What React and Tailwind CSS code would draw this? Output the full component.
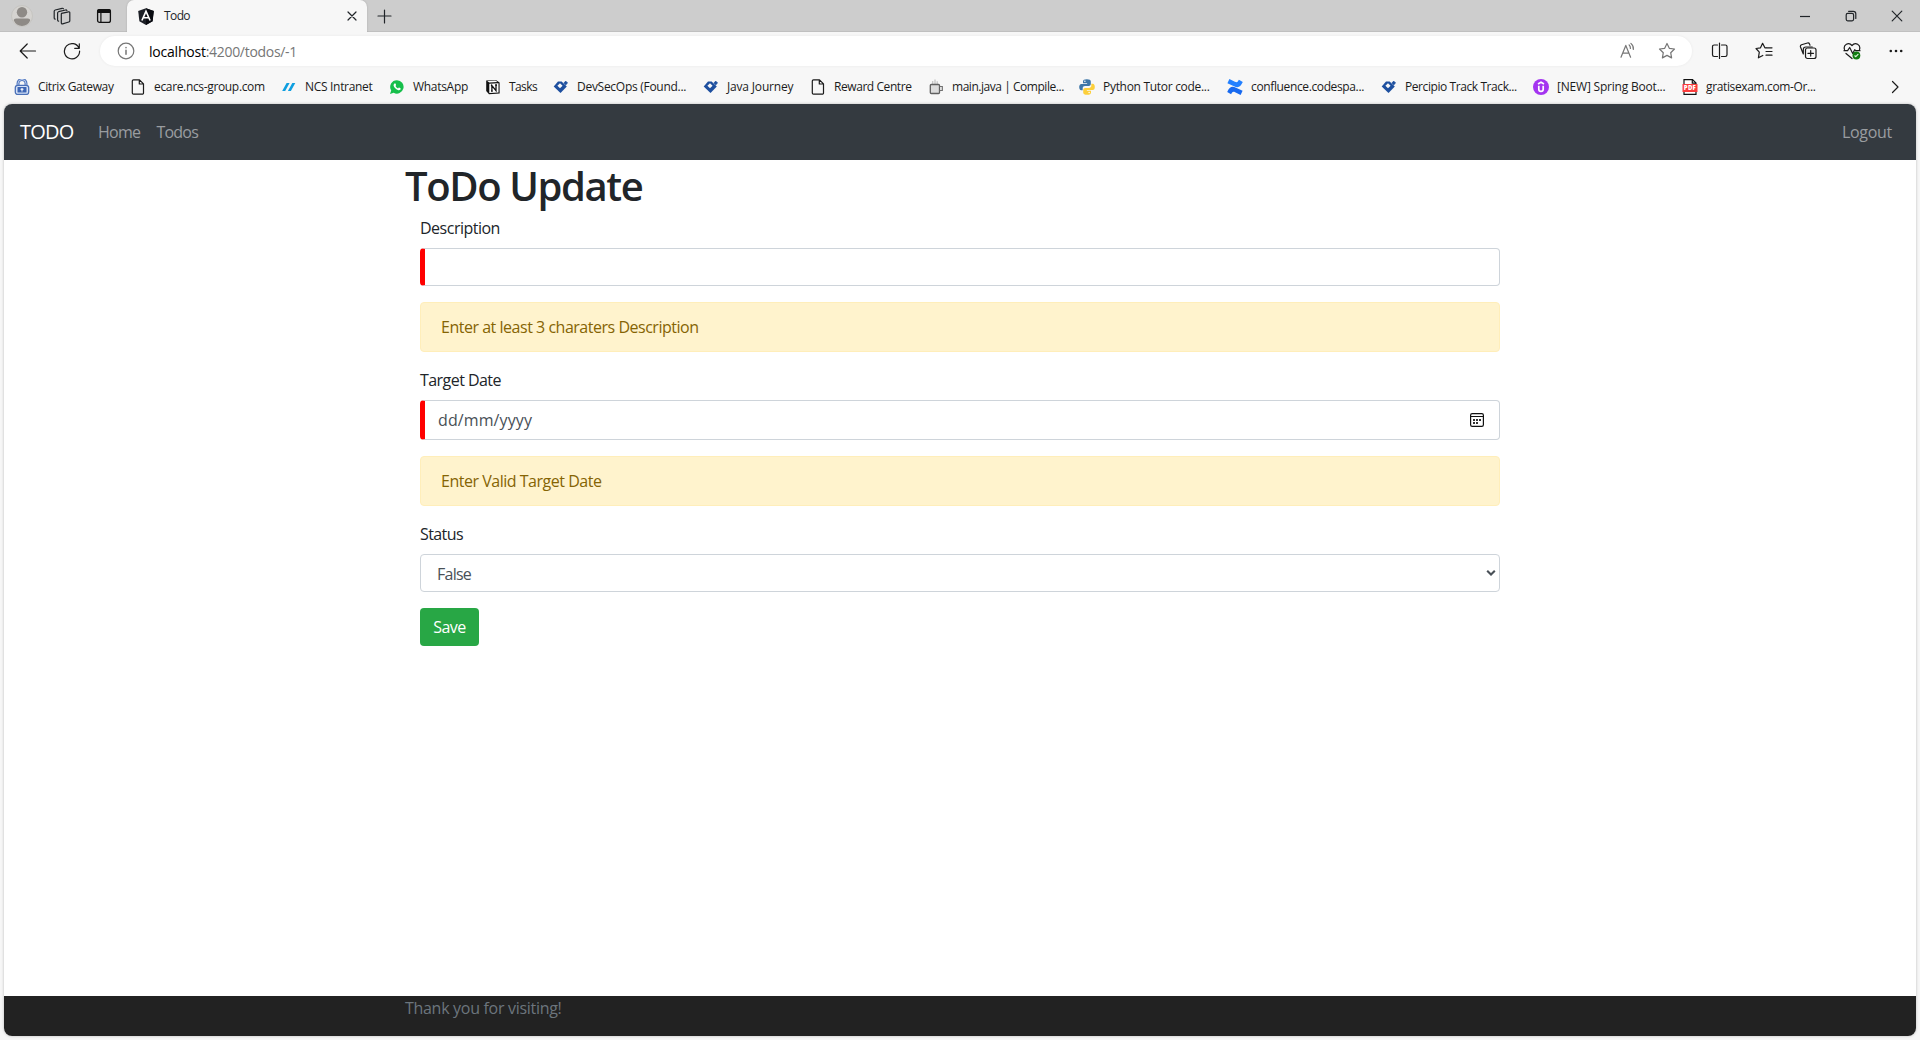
function Stroke({ size = 18, children, className = '' }) {
  return (
    <svg width={size} height={size} viewBox={`0 0 ${size} ${size}`} fill="none" stroke="currentColor" strokeWidth="1.2" strokeLinecap="round" strokeLinejoin="round" className={`block shrink-0 ${className}`}>
      {children}
    </svg>
  );
}

function FileIcon() {
  return (
    <Stroke size={16}>
      <path d="M3.5.8h6l4 4V14a1.2 1.2 0 0 1-1.2 1.2H3.500A1.200 1.200 0 0 1 2.300 14V2A1.200 1.200 0 0 1 3.500.8zM9.300.8v4.200h4.200" />
    </Stroke>
  );
}

function LockIcon() {
  return (
    <svg width="16" height="16" viewBox="0 0 16 16">
      <path d="M4 8V4.500a4 4 0 0 1 8 0V8" fill="none" stroke="#4f76bf" strokeWidth="3" />
      <path d="M4 8V4.500a4 4 0 0 1 8 0V8" fill="none" stroke="#c9d8f2" strokeWidth=".9" />
      <rect x="1.300" y="6.300" width="13.400" height="9.200" rx="2.500" fill="#d6e2f7" stroke="#4a70b8" strokeWidth="1.300" />
      <rect x="3.500" y="8" width="9" height="5.600" rx=".6" fill="#3d66b5" />
      <path d="M8 9v3.500M6.500 10.300h3" stroke="#fff" strokeWidth="1.100" />
    </svg>
  );
}

function SlashIcon() {
  return (
    <svg width="16" height="16" viewBox="0 0 16 16" fill="#0f9fe0">
      <path d="M5.600 4h3L4.200 12h-3zM11.300 4h3l-4.400 8h-3z" />
    </svg>
  );
}

function WhatsAppIcon() {
  return (
    <svg width="16" height="16" viewBox="0 0 16 16">
      <path d="M8 1.200a6.700 6.700 0 1 1-3.300 12.600L1 15l1.200-3.600A6.700 6.700 0 0 1 8 1.200z" fill="#16bf4b" />
      <path d="M5.600 4.400c.5-.2.900 0 1.100.6l.4 1c.1.400-.4.800-.6 1 .6 1.200 1.400 1.900 2.600 2.400.3-.3.600-.9 1-.8l1.300.7c.5.200.2 1.100-.2 1.500-.6.500-1.500.6-2.400.2-2-.8-3.400-2.200-4.100-4-.3-1 .1-2.200.9-2.600z" fill="#fff" />
    </svg>
  );
}

function NotionIcon() {
  return (
    <svg width="16" height="16" viewBox="0 0 16 16">
      <path d="M1.200 1.600L10.800.9l3.800 2.700V14.500L4 15.200 1.200 12z" fill="#111" />
      <path d="M2.300 2.100l8.200-.6 1.900 1.400-8.100.5z" fill="#fff" />
      <path d="M4.300 4.700l9.200-.5v9.300l-9.200.6z" fill="#fff" />
      <path d="M6.900 12V6.600L11 11.600V6.100M5.900 6.500h1.500M6 12.200h1.800M10.100 6h1.900" fill="none" stroke="#111" strokeWidth="1.300" />
    </svg>
  );
}

function DiamondIcon() {
  return (
    <svg width="16" height="16" viewBox="0 0 16 16" fill="#1d4f9f">
      <path d="M5 2.400h3.600l5.200 5.200-6.300 6.300L.7 7.600z" />
      <path d="M7 4.300l2.600 2.500L7 9.300 4.400 6.800z" fill="#f7f7f7" />
      <path d="M12.700 2.100l1.900 1.900-1.900 1.900L10.800 4z" stroke="#1d4f9f" strokeWidth=".7" strokeLinejoin="round" />
    </svg>
  );
}

function CupIcon() {
  return (
    <svg width="16" height="16" viewBox="0 0 16 16" fill="none">
      <path d="M4.700 5V2M7 5V.6M9.200 5V2.200" stroke="#c0c0c0" strokeWidth="1.200" />
      <rect x="2.300" y="5.500" width="9.200" height="9" rx="1" fill="#dcdcdc" stroke="#606060" strokeWidth="1.300" />
      <path d="M11.500 7.500H14.300v4h-2.800" stroke="#707070" strokeWidth="1.200" />
    </svg>
  );
}

function PythonIcon() {
  return (
    <svg width="16" height="16" viewBox="0 0 16 16">
      <path d="M7.900.3c-2.700 0-3.900.8-3.900 2.300v1.700h4.100v.6H2.400C.9 4.900.2 6.300.2 8s.7 3.200 2 3.200h1.500V9.300c0-1.300 1-2.200 2.300-2.200h3.800c1.100 0 2-.9 2-2V2.600C11.800 1 10.400.3 7.900.3z" fill="#3d76a8" />
      <path d="M8.100 15.700c2.700 0 3.900-.8 3.900-2.300v-1.700H7.900v-.6h5.700c1.500 0 2.200-1.400 2.200-3.100s-.7-3.200-2-3.200h-1.500v1.900c0 1.300-1 2.200-2.300 2.200H6.200c-1.100 0-2 .9-2 2v2.500c0 1.600 1.400 2.300 3.900 2.300z" fill="#fccf3b" />
      <circle cx="5.900" cy="2.300" r=".75" fill="#fff" />
      <circle cx="10.100" cy="13.600" r=".75" fill="#fff" />
    </svg>
  );
}

function ConfluenceIcon() {
  return (
    <svg width="16" height="16" viewBox="0 0 16 16">
      <path d="M.2 12.900C2.700 7.600 5 6.800 9 8.700l6.600 3.100-2 4.100-5.500-2.600c-1.900-.9-2.600-.6-4 2z" fill="#1769ef" />
      <path d="M15.800 3.100C13.300 8.400 11 9.200 7 7.300L.4 4.200l2-4.100 5.500 2.600c1.900.9 2.600.6 4-2z" fill="#2380ff" />
    </svg>
  );
}

function UdemyIcon() {
  return (
    <svg width="16" height="16" viewBox="0 0 16 16">
      <circle cx="8" cy="8" r="8" fill="#a435f0" />
      <path d="M5 4.900L8 3.200l3 1.700M5.800 6.700v3.500a2.200 2.200 0 0 0 4.400 0V6.700" fill="none" stroke="#fff" strokeWidth="1.700" />
    </svg>
  );
}

function PdfIcon() {
  return (
    <svg width="16" height="16" viewBox="0 0 16 16">
      <path d="M2 .6h8.500L14 4v11.400H2z" fill="#fff" stroke="#111" strokeWidth="1.200" />
      <path d="M10.300.6v3.600H14" fill="none" stroke="#111" strokeWidth="1.200" />
      <rect x=".5" y="5" width="15" height="8" fill="#fb3b3b" />
      <text x="8" y="11.200" textAnchor="middle" fontFamily="Open Sans, sans-serif" fontSize="6" fontWeight="800" letterSpacing=".3" fill="#fff">PDF</text>
    </svg>
  );
}

const bookmarks = [
  { icon: LockIcon, label: 'Citrix Gateway', box: 'w-[116px] tracking-[-0.36px]' },
  { icon: FileIcon, label: 'ecare.ncs-group.com', box: 'w-[151px] tracking-[-0.34px]' },
  { icon: SlashIcon, label: 'NCS Intranet', box: 'w-[108px] tracking-[-0.31px]' },
  { icon: WhatsAppIcon, label: 'WhatsApp', box: 'w-[96px] tracking-[-0.3px]' },
  { icon: NotionIcon, label: 'Tasks', box: 'w-[68px] tracking-[-0.6px]' },
  { icon: DiamondIcon, label: 'DevSecOps (Found...', box: 'w-[150px] tracking-[-0.28px]' },
  { icon: DiamondIcon, label: 'Java Journey', box: 'w-[107px] tracking-[-0.17px]' },
  { icon: FileIcon, label: 'Reward Centre', box: 'w-[118px] tracking-[-0.43px]' },
  { icon: CupIcon, label: 'main.java | Compile...', box: 'w-[151px] tracking-[-0.46px]' },
  { icon: PythonIcon, label: 'Python Tutor code...', box: 'w-[148px] tracking-[-0.3px]' },
  { icon: ConfluenceIcon, label: 'confluence.codespa...', box: 'w-[154px] tracking-[-0.37px]' },
  { icon: DiamondIcon, label: 'Percipio Track Track...', box: 'w-[152px] tracking-[-0.42px]' },
  { icon: UdemyIcon, label: '[NEW] Spring Boot...', box: 'w-[149px] tracking-[-0.2px]' },
  { icon: PdfIcon, label: 'gratisexam.com-Or...', box: 'w-[150px] tracking-[-0.36px]' },
];

function TabStrip() {
  return (
    <div className="flex h-8 shrink-0 items-center bg-[#cdcdcd] shadow-[inset_0_-1px_0_#c0c0c0]">
      <svg width="22" height="22" viewBox="0 0 22 22" className="ml-[11px] shrink-0">
        <circle cx="11" cy="11" r="10.500" fill="#d5d3d0" stroke="#c3c1be" strokeWidth=".8" />
        <circle cx="11" cy="7.300" r="5.200" fill="#8e8a86" />
        <path d="M2.800 15.500c0-1.300 1-2.100 2.300-2.100h11.800c1.300 0 2.300.8 2.300 2.100A9.300 9.300 0 0 1 11 21a9.300 9.300 0 0 1-8.200-5.500z" fill="#8e8a86" />
      </svg>
      <Stroke className="ml-5">
        <path d="M8.600 6.300l6.900-1.500q1.300-.2 1.300 1v7.900q0 1-1 1.300l-6.200 1.800q-1.300.3-1.300-1V7.500q0-1 .3-1.200z" />
        <path d="M5.600 14.100q-1-.1-1-1.200V6q0-1 1-1.300l7-1.700q.9-.2 1.300.5M2.200 12.100q-1-.2-1-1.200V4.300q0-1 1-1.300l6.900-1.700q1-.2 1.300.5" />
      </Stroke>
      <svg width="16" height="16" viewBox="0 0 16 16" className="ml-[25px] shrink-0">
        <rect x="1.600" y="1.600" width="12.800" height="12.800" rx="2" fill="none" stroke="#111" strokeWidth="1.300" />
        <path d="M1 5V3.200A2.200 2.200 0 0 1 3.200 1h9.600A2.200 2.200 0 0 1 15 3.200V5z" fill="#111" />
        <path d="M4.900 5v9.400" stroke="#111" strokeWidth="1.200" />
      </svg>
      <div className="ml-[15px] flex h-8 w-[240px] items-center rounded-t-[7px] bg-[#f7f7f7] pl-[11px] pr-[9px] shadow-[0_0_2px_#00000030] [clip-path:inset(0_-3px_0_-3px)]">
        <svg width="16" height="17" viewBox="0 0 16 17">
          <path d="M8 .2L15.800 3l-1.200 10.300L8 17l-6.600-3.700L.2 3z" fill="#1c1f26" />
          <path d="M8 .2L15.800 3l-1.200 10.300L8 17z" fill="#090b11" />
          <path d="M3.900 12.500L8 3.300l4.100 9.200M5.700 9.800h4.600" fill="none" stroke="#fff" strokeWidth="1.600" />
        </svg>
        <span className="ml-[10px] grow text-[12px] tracking-[-0.6px]">Todo</span>
        <Stroke size={12}><path d="M2 2l8 8M10 2l-8 8" /></Stroke>
      </div>
      <Stroke size={16} className="ml-[10px]"><path d="M7.500 1.500v13M1 7.500h13" transform="translate(0 .5)" /></Stroke>
      <div className="ml-auto flex items-center">
        <Stroke size={12} className="mr-[34px]"><path d="M1 6.500h10" strokeLinecap="butt" /></Stroke>
        <Stroke size={12} className="mr-[34px]">
          <rect x="1.200" y="3.400" width="7.400" height="7.400" rx="1.500" />
          <path d="M3.600 1.300h4.700q2.500 0 2.500 2.500v4.600" />
        </Stroke>
        <Stroke size={12} className="mr-[17px]"><path d="M1.200 1.200l9.600 9.600M10.800 1.200l-9.600 9.600" /></Stroke>
      </div>
    </div>
  );
}

function AddressBar() {
  return (
    <div className="flex h-[38px] shrink-0 items-center text-[#1b1b1b]">
      <Stroke className="ml-[19px]"><path d="M16.500 9H1.500M8.200 2L1.200 9l7 7" /></Stroke>
      <Stroke className="ml-[26px]"><path d="M16 6.200A7.600 7.600 0 1 0 16.600 9M16.300 1.800v4.500h-4.600" /></Stroke>
      <div className="ml-[19px] flex h-[30px] w-[1592px] items-center rounded-full bg-white pl-[17px] pr-4 text-[#767676] shadow-[0_0_3px_#00000010]">
        <Stroke><circle cx="9" cy="9" r="7.800" /><path d="M9 8.300v4M9 5.500v.3" strokeWidth="1.500" /></Stroke>
        <span className="ml-[14px] flex text-[14px]">
          <span className="tracking-[-0.22px] text-black">localhost</span>
          <span className="tracking-[-0.3px]">:4200/todos/-1</span>
        </span>
        <Stroke size={18} className="ml-auto">
          <path d="M2.500 15.500L7.300 3.700l4.800 11.800M4.200 11.500h6.300M10.600 3.200q1.500 1.500 1.300 3.600M12.400 1.700q3 2.600 2.400 6" transform="translate(.5 -.3)" />
        </Stroke>
        <Stroke className="ml-[22px]"><path d="M9 1.500l2.300 4.800 5.200.7-3.800 3.700.9 5.200L9 13.400l-4.600 2.500.9-5.200L1.500 7l5.200-.7z" /></Stroke>
      </div>
      <Stroke className="ml-[19px]"><path d="M6.500 3H3.200Q1.500 3 1.500 4.600v8.200q0 1.700 1.700 1.700h3.300M10.500 3h3.800q1.700 0 1.700 1.600v8.200q0 1.700-1.700 1.700h-3.800M8.500 1v15.500" /></Stroke>
      <Stroke className="ml-[26px]"><path d="M11.300 5.800H9.900L7.600 1.300 5.500 5.800 1 6.500l3.300 3.700-.9 5.600 4.400-2.300M11.500 5.800H17M11 9.500h6M11 13.200h6" /></Stroke>
      <Stroke className="ml-[26px]">
        <path d="M4.300 12L1.500 5q-.5-1.500 1-2.200L8.500 1q1.400-.4 2 .9l.5 1.300M4.300 12V7.500q0-2.500 2.500-2.500h6.500" />
        <rect x="6.500" y="6" width="10.500" height="10.500" rx="2" fill="#f7f7f7" />
        <path d="M11.700 8.500v5.600M8.900 11.300h5.600" />
      </Stroke>
      <Stroke className="ml-[26px]">
        <path d="M1.500 7.500C0 3 5.500-.5 9 3.500c3.500-4 9-.5 7.500 4M1 8.700h3.600L6.700 5.500l3 6 2-3.800 1 1H17M3 11.500l6 5" />
        <circle cx="13.400" cy="13.500" r="3.900" fill="#107c10" stroke="none" />
        <path d="M11.800 13.800l1 .9 2.200-2.300" stroke="#d9f2d9" />
      </Stroke>
      <svg width="16" height="16" viewBox="0 0 16 16" className="ml-[27px]" fill="#1b1b1b">
        <circle cx="2.800" cy="8" r="1.300" /><circle cx="8" cy="8" r="1.300" /><circle cx="13.200" cy="8" r="1.300" />
      </svg>
    </div>
  );
}

function BookmarksBar() {
  return (
    <div className="flex h-[34px] shrink-0 items-center pl-[14px] text-[12px] text-[#1b1b1b]">
      {bookmarks.map(({ icon: Icon, label, box }) => (
        <div key={label} className={`flex shrink-0 items-center gap-2 whitespace-nowrap ${box}`}>
          <Icon />
          <span>{label}</span>
        </div>
      ))}
      <Stroke size={14} className="ml-auto mr-[18px]"><path d="M4.500 1.500L10 7l-5.500 5.500" /></Stroke>
    </div>
  );
}

function Alert({ children }) {
  return (
    <div className="mb-4 h-[50px] rounded border border-[#ffeeba] bg-[#fff3cd] px-5 py-3 leading-6 tracking-[-0.48px] text-[#856404]">
      {children}
    </div>
  );
}

function TodoForm() {
  return (
    <form className="px-[15px]">
      <label className="mb-2 block leading-6 tracking-[-0.5px]">Description</label>
      <input type="text" className="mb-4 block h-[38px] w-full rounded border border-l-[5px] border-[#ced4da] border-l-[red] bg-white" />
      <Alert>Enter at least 3 charaters Description</Alert>
      <label className="mb-2 block leading-6 tracking-[-0.55px]">Target Date</label>
      <div className="mb-4 flex h-10 items-center justify-between rounded border border-l-[5px] border-[#ced4da] border-l-[red] bg-white pl-[13px] pr-[15px] text-[#495057]">
        <span className="tracking-[0.1px]">dd/mm/yyyy</span>
        <svg width="14" height="14" viewBox="0 0 14 14" fill="none">
          <rect x=".6" y=".6" width="12.800" height="12.800" rx="1.600" stroke="#111" strokeWidth="1.200" />
          <path d="M.6 3.500h12.800" stroke="#111" />
          <path d="M3 7h2m1 0h2m1 0h2M3 10h2m1 0h2" stroke="#333" strokeWidth="2" />
        </svg>
      </div>
      <Alert>Enter Valid Target Date</Alert>
      <label className="mb-2 block leading-6 tracking-[-0.6px]">Status</label>
      <div className="mb-4 flex h-[38px] items-center justify-between rounded border border-[#ced4da] bg-white pl-4 pr-[3px] text-[#495057]">
        <span className="pt-px tracking-[-0.75px]">False</span>
        <svg width="10" height="8" viewBox="0 0 10 8" fill="none"><path d="M1.200 1.800L5 5.500l3.800-3.700" stroke="#495057" strokeWidth="2.100" /></svg>
      </div>
      <button type="button" className="block h-[38px] w-[59px] rounded bg-[#28a745] tracking-[-0.5px] text-white">Save</button>
    </form>
  );
}

export default function App() {
  return (
    <div className="flex h-[1040px] w-[1920px] flex-col overflow-hidden bg-[#f7f7f7] font-['Open_Sans',sans-serif] text-[#212529]">
      <TabStrip />
      <AddressBar />
      <BookmarksBar />
      <div className="mx-1 flex h-[932px] shrink-0 flex-col overflow-hidden rounded-lg bg-white shadow-[0_0_3px_#00000040]">
        <nav className="flex h-14 shrink-0 items-center bg-[#343a40] px-4 text-[#9a9da0]">
          <span className="w-[78px] text-[20px] tracking-[-0.8px] text-white">TODO</span>
          <span className="w-[58.500px] tracking-[-0.75px]">Home</span>
          <span className="tracking-[-0.8px]">Todos</span>
          <span className="ml-auto mr-2 tracking-[-0.3px]">Logout</span>
        </nav>
        <main className="mx-auto w-[1110px] grow">
          <h1 className="mb-1.5 pt-0.5 text-[40px] font-semibold leading-[48px] tracking-[-1.4px]">ToDo Update</h1>
          <TodoForm />
        </main>
        <footer className="h-10 shrink-0 bg-[#222]">
          <div className="mx-auto w-[1110px] leading-6 tracking-[-0.3px] text-[#6c757d]">Thank you for visiting!</div>
        </footer>
      </div>
    </div>
  );
}
